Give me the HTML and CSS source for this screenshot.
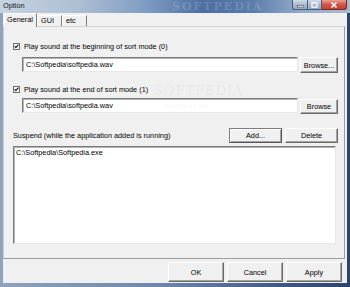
FILE: index.html
```html
<!DOCTYPE html>
<html>
<head>
<meta charset="utf-8">
<title>Option</title>
<link rel="stylesheet" href="styles.css">
</head>
<body>
<div class="window">
  <div class="titlebar">
    <span class="title">Option</span>
    <span class="title-wm">SOFTPEDIA</span>
    <div class="caption-btns">
      <div class="cb cb-min"><svg width="7" height="6" viewBox="0 0 7 6"><rect x="0.5" y="3.5" width="6" height="1.6" fill="#fff" stroke="#3c4d66" stroke-width="0.6"/></svg></div>
      <div class="cb cb-max"><svg width="7" height="6" viewBox="0 0 7 6"><rect x="1" y="0.8" width="5" height="4.4" fill="none" stroke="#fff" stroke-width="1.2"/></svg></div>
      <div class="cb cb-close"><svg width="8" height="6" viewBox="0 0 8 6"><path d="M1.5 0.5 L6.5 5.5 M6.5 0.5 L1.5 5.5" stroke="#fff" stroke-width="1.5"/></svg></div>
    </div>
  </div>
  <div class="client">
    <div class="tabs">
      <div class="tab tab-active">General</div>
      <div class="tab">GUI</div>
      <div class="tab">etc</div>
    </div>
    <div class="panel">
      <span class="wm-big">SOFTPEDIA</span>
      <span class="wm-url">www.softpedia.com</span>
      <div class="check-row">
        <svg class="checkbox" width="7" height="7" viewBox="0 0 7 7"><rect x="0.5" y="0.5" width="6" height="6" fill="#fff" stroke="#707070"/><path d="M1.6 3.1 L2.9 4.6 L5.4 1.6" fill="none" stroke="#1a1a1a" stroke-width="1.2"/></svg>
        <span>Play sound at the beginning of sort mode (0)</span>
      </div>
      <div class="file-row">
        <div class="input">C:\Softpedia\softpedia.wav</div>
        <div class="btn btn-browse">Browse...</div>
      </div>
      <div class="check-row check-row-2">
        <svg class="checkbox" width="7" height="7" viewBox="0 0 7 7"><rect x="0.5" y="0.5" width="6" height="6" fill="#fff" stroke="#707070"/><path d="M1.6 3.1 L2.9 4.6 L5.4 1.6" fill="none" stroke="#1a1a1a" stroke-width="1.2"/></svg>
        <span>Play sound at the end of sort mode (1)</span>
      </div>
      <div class="file-row file-row-2">
        <div class="input">C:\Softpedia\softpedia.wav</div>
        <div class="btn btn-browse">Browse</div>
      </div>
      <div class="suspend-row">
        <span class="suspend-label">Suspend (while the application added is running)</span>
        <div class="btn btn-small btn-focus">Add...</div>
        <div class="btn btn-small">Delete</div>
      </div>
      <div class="listbox">
        <div class="list-item">C:\Softpedia\Softpedia.exe</div>
      </div>
    </div>
    <div class="footer">
      <div class="btn btn-dlg">OK</div>
      <div class="btn btn-dlg">Cancel</div>
      <div class="btn btn-dlg">Apply</div>
    </div>
  </div>
</div>
</body>
</html>
```
FILE: styles.css
```css
* { box-sizing: border-box; margin: 0; padding: 0; }
html, body { width: 350px; height: 287px; overflow: hidden; }
body {
  background: linear-gradient(to right, #8ea3bd 0%, #6d88ab 45%, #3d5a84 80%, #2a456c 100%);
  font-family: "Liberation Sans", Arial, sans-serif;
  font-size: 7.3px;
  color: #000;
}
.window {
  width: 350px;
  height: 287px;
  display: flex;
  flex-direction: column;
  padding: 0 3px 4px 3px;
}
.titlebar {
  height: 13px;
  margin: 0 -3px;
  padding: 0 3px;
  display: flex;
  align-items: flex-start;
  position: relative;
  overflow: hidden;
  background: linear-gradient(to right, #c6d3e1 0%, #aebfd3 22%, #7e9cc2 42%, #4c6fa0 58%, #5a7cab 72%, #93abc8 86%, #a9bbd0 100%);
}
.title { line-height: 12px; color: #141414; }
.title-wm {
  position: absolute;
  left: 172px;
  top: 0;
  font-family: "DejaVu Serif", serif;
  font-size: 11px;
  line-height: 13px;
  font-weight: bold;
  letter-spacing: 2px;
  color: rgba(255, 255, 255, 0.16);
}
.caption-btns {
  margin-left: auto;
  display: flex;
  height: 10px;
  position: relative;
}
.cb {
  height: 10px;
  display: flex;
  align-items: center;
  justify-content: center;
  border: 1px solid #4b5d78;
  border-top: none;
}
.cb-min {
  width: 15px;
  border-radius: 0 0 0 3px;
  border-right: none;
  background: linear-gradient(to bottom, #d2dce8, #a8b8cd 55%, #95a8c2);
}
.cb-max {
  width: 15px;
  background: linear-gradient(to bottom, #d2dce8, #a8b8cd 55%, #95a8c2);
}
.cb-close {
  width: 25px;
  border-left: none;
  border-radius: 0 0 3px 0;
  border-color: #7b2a23;
  background: linear-gradient(to bottom, #e7a093, #d2574a 50%, #c2402f);
}
.client {
  flex: 1;
  background: #f0f0f0;
  display: flex;
  flex-direction: column;
}
.tabs {
  height: 13px;
  display: flex;
  align-items: flex-start;
  padding-left: 1px;
  position: relative;
  z-index: 1;
}
.tab {
  margin-top: 2px;
  height: 11px;
  width: 25px;
  padding-left: 3px;
  line-height: 10px;
  border-top: 1px solid #ffffff;
  border-left: 1px solid #ffffff;
  border-right: 1px solid #7c7c7c;
  background: #f0f0f0;
}
.tab-active {
  margin-top: 0;
  height: 14px;
  width: 33px;
  padding-left: 2px;
  line-height: 12px;
}
.panel {
  position: relative;
  height: 233px;
  margin-right: 2px;
  padding: 15px 6px 0 9px;
  border: 1px solid;
  border-color: #d4d4d4 #9c9c9c #9c9c9c #cfcfcf;
  display: flex;
  flex-direction: column;
}
.wm-big {
  position: absolute;
  left: 150px;
  top: 56px;
  font-family: "DejaVu Serif", serif;
  font-size: 13px;
  letter-spacing: 1px;
  color: rgba(0, 0, 0, 0.05);
}
.wm-url {
  position: absolute;
  left: 160px;
  top: 76px;
  font-size: 5px;
  color: rgba(0, 0, 0, 0.09);
}
.check-row {
  height: 9px;
  display: flex;
  align-items: center;
  gap: 4px;
}
.checkbox { flex: none; }
.check-row-2 { margin-top: 12px; }
.file-row {
  margin-top: 6px;
  margin-left: 9px;
  height: 16px;
  display: flex;
  align-items: flex-start;
  gap: 2px;
}
.file-row-2 { margin-top: 4px; }
.file-row-2 .btn-browse { margin-top: 1px; height: 15px; }
.input {
  flex: 1;
  height: 15px;
  background: #fff;
  border: 1px solid;
  border-color: #7a7a7a #e8e8e8 #e8e8e8 #7a7a7a;
  box-shadow: inset 1px 1px 0 #b4b4b4;
  padding-left: 3px;
  line-height: 13px;
}
.btn {
  display: flex;
  align-items: center;
  justify-content: center;
  background: #f0f0f0;
  border: 1px solid;
  border-color: #ffffff #6b6b6b #6b6b6b #ffffff;
  box-shadow: inset -1px -1px 0 #a3a3a3;
}
.btn-browse { width: 38px; height: 16px; }
.suspend-row {
  margin-top: 14px;
  height: 15px;
  display: flex;
  align-items: center;
  gap: 3px;
}
.suspend-label { flex: 1; }
.btn-small { width: 53px; height: 15px; }
.btn-focus { border-color: #7d7d7d #555 #555 #7d7d7d; box-shadow: inset 1px 1px 0 #fff, inset -1px -1px 0 #a3a3a3; }
.listbox {
  margin-top: 3px;
  margin-right: 2px;
  height: 98px;
  background: #fff;
  border: 1px solid;
  border-color: #7a7a7a #e8e8e8 #e8e8e8 #7a7a7a;
  box-shadow: inset 1px 1px 0 #b4b4b4;
  padding: 1px 0 0 2px;
}
.list-item { line-height: 10px; }
.footer {
  height: 24px;
  display: flex;
  justify-content: flex-end;
  align-items: flex-start;
  gap: 3px;
  padding: 3px 5px 0 0;
}
.btn-dlg { width: 56px; height: 20px; }
```
